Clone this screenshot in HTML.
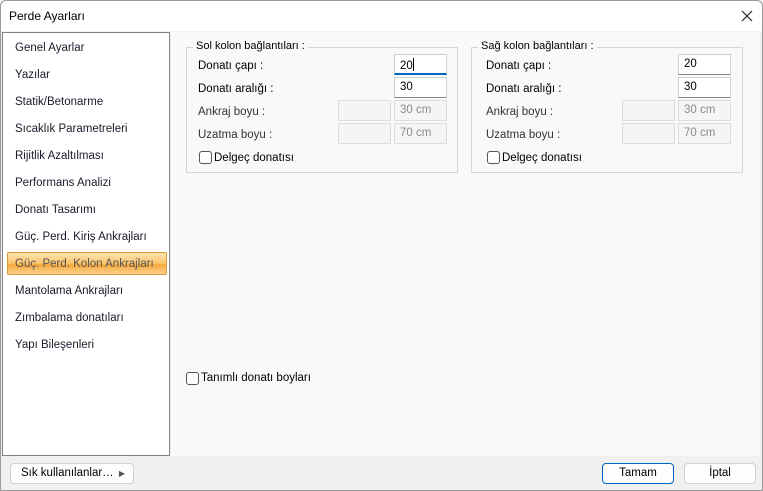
<!DOCTYPE html><html><head><style>
*{box-sizing:border-box;margin:0;padding:0}
body{width:763px;height:491px;background:#f0f0f0;font-family:"Liberation Sans",sans-serif;font-size:11.5px;color:#000;position:relative;overflow:hidden}
.abs{position:absolute}
.win{left:0;top:0;width:763px;height:491px;border:1px solid #9a9a9a;border-radius:6px 6px 0 0}
.title{left:1px;top:1px;width:761px;height:30px;background:#fff;border-radius:6px 6px 0 0}
.list{left:2px;top:32px;width:168px;height:424px;background:#fff;border:1px solid #828282}
.item{position:absolute;left:12px;color:#1a1a2a}
.sel{left:4px;top:219px;width:160px;height:23px;border:1px solid #d49a3a;border-radius:2px;background:linear-gradient(#fde3b0,#fbc46a 50%,#f7a93c 55%,#fbd08a)}
.panel{left:171px;top:32px;width:589px;height:424px;background:#f9f9f9}
.grp{border:1px solid #d5d5d5;height:126px;top:47px}
.gl{top:-8px;left:6px;background:#f9f9f9;padding:0 3px;font-size:11px}
.lbl{position:absolute}
.inp{position:absolute;width:53px;height:21px;background:#fff;border:1px solid #d0d0d0;border-bottom:1px solid #888;padding:3px 5px}
.dis{position:absolute;width:53px;height:21px;background:#f5f5f5;border:1px solid #ddd;padding:3px 5px;color:#8a8a8a}
.cb{position:absolute;width:13px;height:13px;border:1px solid #555;border-radius:3px;background:#fff}
.btn{position:absolute;height:21px;border:1px solid #d0d0d0;border-radius:4px;background:#fdfdfd;text-align:center;line-height:19px}
</style></head><body>
<div class="abs win"></div>
<div class="abs title"><div class="abs" style="left:8px;top:8px;font-size:12px">Perde Ayarları</div>
<svg class="abs" style="left:740px;top:9px" width="12" height="12"><path d="M1 1L11 11M11 1L1 11" stroke="#222" stroke-width="1.2"/></svg></div>
<div class="abs list">
<div class="abs sel"></div>
<div class="item" style="top:9px">Genel Ayarlar</div>
<div class="item" style="top:36px">Yazılar</div>
<div class="item" style="top:63px">Statik/Betonarme</div>
<div class="item" style="top:90px">Sıcaklık Parametreleri</div>
<div class="item" style="top:117px">Rijitlik Azaltılması</div>
<div class="item" style="top:144px">Performans Analizi</div>
<div class="item" style="top:171px">Donatı Tasarımı</div>
<div class="item" style="top:198px">Güç. Perd. Kiriş Ankrajları</div>
<div class="item" style="top:225px;color:#555">Güç. Perd. Kolon Ankrajları</div>
<div class="item" style="top:252px">Mantolama Ankrajları</div>
<div class="item" style="top:279px">Zımbalama donatıları</div>
<div class="item" style="top:306px">Yapı Bileşenleri</div>
</div>
<div class="abs panel"></div>

<div class="abs grp" style="left:186px;width:272px">
<div class="abs gl">Sol kolon bağlantıları :</div>
<div class="lbl" style="left:11px;top:12px">Donatı çapı :</div>
<div class="lbl" style="left:11px;top:35px">Donatı aralığı :</div>
<div class="lbl" style="left:11px;top:58px;color:#333">Ankraj boyu :</div>
<div class="lbl" style="left:11px;top:81px;color:#333">Uzatma boyu :</div>
<div class="inp" style="left:207px;top:6px;border-bottom:2px solid #0067c0">20<span style="display:inline-block;width:1px;height:13px;background:#000;vertical-align:-2px"></span></div>
<div class="inp" style="left:207px;top:29px">30</div>
<div class="dis" style="left:151px;top:52px"></div><div class="dis" style="left:207px;top:52px">30 cm</div>
<div class="dis" style="left:151px;top:75px"></div><div class="dis" style="left:207px;top:75px">70 cm</div>
<div class="cb" style="left:12px;top:103px"></div><div class="lbl" style="left:27px;top:104px">Delgeç donatısı</div>
</div>

<div class="abs grp" style="left:471px;width:272px">
<div class="abs gl">Sağ kolon bağlantıları :</div>
<div class="lbl" style="left:14px;top:12px">Donatı çapı :</div>
<div class="lbl" style="left:14px;top:35px">Donatı aralığı :</div>
<div class="lbl" style="left:14px;top:58px;color:#333">Ankraj boyu :</div>
<div class="lbl" style="left:14px;top:81px;color:#333">Uzatma boyu :</div>
<div class="inp" style="left:206px;top:6px">20</div>
<div class="inp" style="left:206px;top:29px">30</div>
<div class="dis" style="left:150px;top:52px"></div><div class="dis" style="left:206px;top:52px">30 cm</div>
<div class="dis" style="left:150px;top:75px"></div><div class="dis" style="left:206px;top:75px">70 cm</div>
<div class="cb" style="left:15px;top:103px"></div><div class="lbl" style="left:30px;top:104px">Delgeç donatısı</div>
</div>

<div class="cb" style="left:186px;top:372px"></div><div class="lbl" style="left:201px;top:372px">Tanımlı donatı boyları</div>

<div class="btn" style="left:10px;top:463px;width:124px;text-align:left;padding-left:10px">Sık kullanılanlar…<span style="position:absolute;right:8px;font-size:8px;color:#555">▶</span></div>
<div class="btn" style="left:602px;top:463px;width:72px;border:1px solid #0067c0">Tamam</div>
<div class="btn" style="left:684px;top:463px;width:72px">İptal</div>
</body></html>
